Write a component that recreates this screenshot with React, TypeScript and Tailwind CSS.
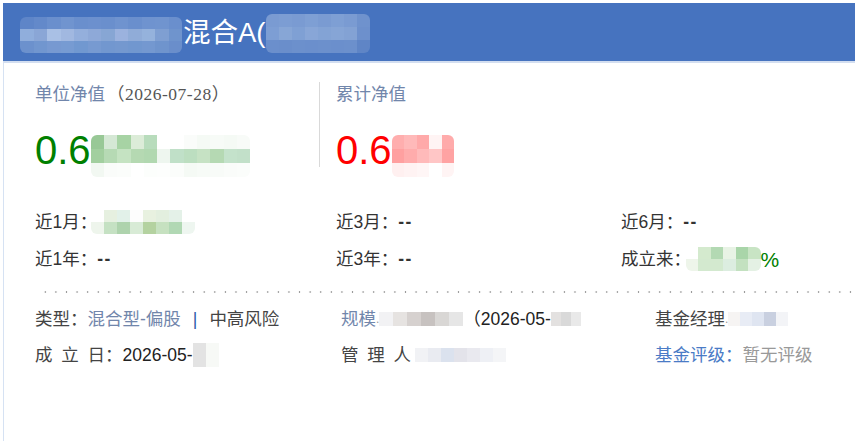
import React from "react";

const F = '"Liberation Sans", "Noto Sans CJK SC", sans-serif';

function Mosaic({ rows, cell, className = "" }: { rows: string[][]; cell: [number, number]; className?: string }) {
  return (
    <span className={"inline-flex flex-col align-middle rounded-[6px] overflow-hidden " + className}>
      {rows.map((r, i) => (
        <span key={i} className="flex">
          {r.map((c, j) => (
            <span key={j} style={{ background: c, width: cell[0], height: cell[1] }} />
          ))}
        </span>
      ))}
    </span>
  );
}

const Dash = () => <span className="font-bold text-[17.5px] tracking-[1.5px]">--</span>;

export default function App() {
  return (
    <div className="w-[855px] h-[441px] bg-white pt-[3px] pl-[3px] overflow-hidden" style={{ fontFamily: F }}>
      <div className="h-[60px] bg-[#4673bf] border-b-2 border-[#d3def0] flex items-center pl-[17px]">
        <Mosaic
          className="mt-[6px]"
          cell={[13.5, 12]}
          rows={[
            ["#5e85c8", "#6389ca", "#6a8fcd", "#7094cf", "#6a8fcd", "#6c90ce", "#6a8fcd", "#6f93cf", "#6a8fcd", "#6f93cf", "#7094cf", "#6a8fcd"],
            ["#90aedc", "#8aa6d6", "#a9c0e5", "#a1b8e0", "#94afdc", "#8ea9d8", "#87a6d4", "#9bb2de", "#90acd8", "#95b2dc", "#7f9fd2", "#6f94cd"],
            ["#6c91cd", "#7196cf", "#7799d1", "#779bd2", "#7198d0", "#779ad1", "#7297cf", "#7498cf", "#7197cf", "#7498d0", "#6f94cd", "#6a8ecb"],
          ]}
        />
        <span className="text-white text-[27.5px] leading-none ml-[1px] mt-[2px]">混合A(</span>
        <Mosaic
          className="mt-[2px]"
          cell={[13, 13]}
          rows={[
            ["#7a9bd2", "#7c9dd3", "#7a9bd2", "#7e9fd4", "#7a9bd2", "#7e9fd4", "#7a9bd2", "#6f92cd"],
            ["#7d9ed4", "#87a6d6", "#7fa0d4", "#88a6d7", "#83a3d5", "#86a5d6", "#83a2d4", "#6d90cc"],
            ["#6b8fcc", "#6a8ecb", "#6c90cc", "#6b8fcc", "#6c90cc", "#6b8fcc", "#6c90cc", "#5f85c6"],
          ]}
        />
      </div>

      <div className="border-l border-[#d6e2f3] h-[380px]">
        <div className="flex pt-[19px]">
          <div className="w-[316px] pl-[31px] border-r border-[#d9d9d9] h-[85px]">
            <div className="text-[17.5px] text-[#7186ab] leading-[24px]">
              单位净值
              <span style={{ fontFamily: '"Liberation Serif", "Noto Sans CJK SC", serif' }} className="text-[#555] tracking-[0.5px] ml-[2px]">
                （2026-07-28）
              </span>
            </div>
            <div className="flex items-center mt-[23px] h-[42px]">
              <span className="text-[40px] leading-none text-[#008000]">0.6</span>
              <Mosaic
                className="ml-0 rounded-[4px] mt-[12px]"
                cell={[13.3, 14]}
                rows={[
                  ["#98c896", "#d5e8d5", "#a7d3a4", "#dcecd8", "#b8dcbc", "#ffffff", "#ffffff", "#fafcfa", "#f5faf5", "#f7fbf7", "#f5faf5", "#f8fbf8"],
                  ["#a2cf9f", "#b6dab4", "#c5e3c2", "#b5d9b2", "#b1d8b0", "#eef6ef", "#c0e0c8", "#bcdec0", "#c6e2c4", "#b5d9b3", "#c4e2cb", "#c2e0c9"],
                  ["#f2f8f2", "#fafcfa", "#fbfdfb", "#ffffff", "#fcfefc", "#fdfefd", "#fbfdfb", "#f5faf5", "#f7fbf7", "#f8fbf8", "#fafcfa", "#fbfdfb"],
                ]}
              />
            </div>
          </div>
          <div className="pl-[16px]">
            <div className="text-[17.5px] text-[#7186ab] leading-[24px]">累计净值</div>
            <div className="flex items-center mt-[23px] h-[42px]">
              <span className="text-[40px] leading-none text-[#ff0000]">0.6</span>
              <Mosaic
                className="rounded-[2px] mt-[12px]"
                cell={[12.5, 14]}
                rows={[
                  ["#ffaeae", "#ffb9b9", "#ffa9a9", "#fff4f4", "#ffabab"],
                  ["#ffa0a0", "#ffacac", "#ffbaba", "#ffc6c6", "#ffa3a3"],
                  ["#fff0f0", "#fff3f3", "#fff6f6", "#ffffff", "#fff4f4"],
                ]}
              />
            </div>
          </div>
        </div>

        <div className="grid grid-cols-[301px_285px_1fr] auto-rows-[24px] pl-[31px] mt-[39px] text-[17.5px] text-[#333] leading-[20px] gap-y-[13px]">
          <div className="flex items-center">
            近1月<span className="w-[11px] inline-block">：</span>
            <Mosaic
              cell={[13, 12]}
              rows={[
                ["#ffffff", "#e6f0e0", "#e2f1e9", "#fdfdfd", "#e8f1e0", "#e3efdf", "#e4f1e8", "#ffffff"],
                ["#eef5ec", "#c5e1c3", "#aed3ad", "#d8ebd6", "#b4d2a0", "#c6e1c0", "#b1d8b4", "#eef6f0"],
              ]}
            />
          </div>
          <div className="flex items-center">近3月：<Dash /></div>
          <div className="flex items-center">近6月：<Dash /></div>
          <div className="flex items-center">近1年：<Dash /></div>
          <div className="flex items-center">近3年：<Dash /></div>
          <div className="flex items-center">
            成立来<span className="w-[12px] inline-block">：</span>
            <Mosaic
              cell={[12.5, 12]}
              rows={[
                ["#ffffff", "#d4eace", "#b3d9b3", "#e8f3e5", "#a9d5a9", "#c8e4c4"],
                ["#eef5ea", "#d3e9cf", "#d3e9cf", "#dcede0", "#c3e1c0", "#e4f1e4"],
              ]}
            />
            <span className="text-[#008000] text-[21px] leading-none">%</span>
          </div>
        </div>

        <div
          className="ml-[36px] mt-[20px] h-[2px]"
          style={{ backgroundImage: "radial-gradient(circle, #999 0.9px, transparent 1.1px)", backgroundSize: "10.6px 2px", backgroundRepeat: "repeat-x" }}
        />

        <div className="grid grid-cols-[306px_314px_1fr] auto-rows-[24px] pl-[31px] mt-[14px] text-[17.5px] text-[#444] leading-[22px] gap-y-[12px]">
          <div className="flex items-center">
            类型：<span className="text-[#7186ab]">混合型-偏股</span>
            <span className="text-[#2f5ba6] mx-[12px]">|</span>
            <span>中高风险</span>
          </div>
          <div className="flex items-center">
            <span className="text-[#7186ab]">规模</span>
            <span className="text-[#999] text-[12px]">.</span>
            <Mosaic
              className="rounded-none"
              cell={[14, 14]}
              rows={[["#f2f2f4", "#e6e3e1", "#d6d1cf", "#c7c2c0", "#d9d7d5", "#e6e6e6"]]}
            />
            <span className="text-[#222]">（2026-05-</span>
            <Mosaic className="rounded-none" cell={[10, 14]} rows={[["#e3e1e0", "#d9d9d9", "#e9e9e9"]]} />
          </div>
          <div className="flex items-center">
            基金经理
            <span className="text-[#999] text-[12px]">.</span>
            <Mosaic className="rounded-none" cell={[12, 14]} rows={[["#f6f4f3", "#e8ecf5", "#dfe5f1", "#c9d0e0", "#f3f4f7"]]} />
          </div>
          <div className="flex items-center">
            成&ensp;立&ensp;日：<span className="text-[#222]">2026-05-</span>
            <Mosaic className="rounded-none" cell={[13, 24]} rows={[["#e3e3e3", "#f7f9f6"]]} />
          </div>
          <div className="flex items-center">
            管&ensp;理&ensp;人
            <Mosaic className="rounded-none ml-[4px]" cell={[13, 14]} rows={[["#f1f2f5", "#e9ebf1", "#dbe2ee", "#e3e3ea", "#e9e9ef", "#eef0f5", "#f4f5f7"]]} />
          </div>
          <div className="flex items-center">
            <span className="text-[#4a7bc6]">基金评级：</span>
            <span className="text-[#999]">暂无评级</span>
          </div>
        </div>
      </div>
    </div>
  );
}
